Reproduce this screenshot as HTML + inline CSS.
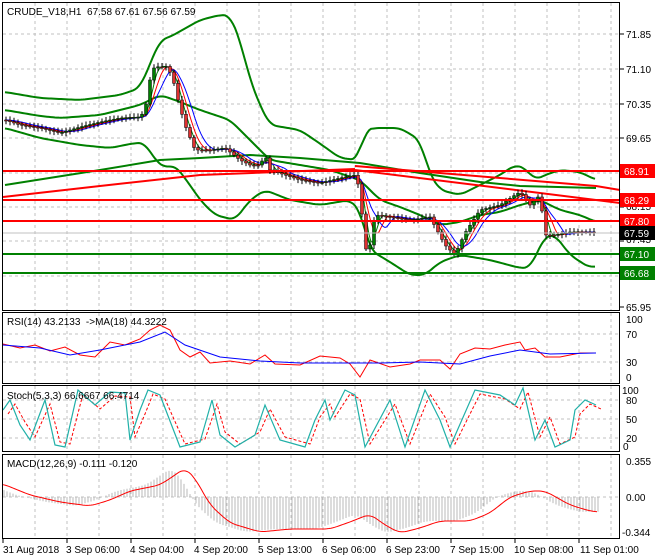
<!DOCTYPE html>
<html><head><meta charset="utf-8"><style>
body{margin:0;background:#fff;width:660px;height:560px;overflow:hidden}
svg{display:block}
text{font-family:"Liberation Sans",sans-serif;font-size:10px}
</style></head><body>
<svg id="s" width="660" height="560" xmlns="http://www.w3.org/2000/svg">
<rect width="660" height="560" fill="#fff"/>
<g id="grid" stroke="#c0c0c0" stroke-dasharray="3,3" stroke-width="1" fill="none"></g>
<g id="dyn"></g>
<g stroke-width="2" fill="none">
<line x1="2" y1="171" x2="620" y2="171" stroke="#f00"/>
<line x1="2" y1="200" x2="620" y2="200" stroke="#f00"/>
<line x1="2" y1="221" x2="620" y2="221" stroke="#f00"/>
<line x1="2" y1="254" x2="620" y2="254" stroke="#008000"/>
<line x1="2" y1="273" x2="620" y2="273" stroke="#008000"/>
</g>
<line x1="2" y1="233" x2="620" y2="233" stroke="#c0c0c0" stroke-width="1"/>
<g stroke="#000" fill="none" stroke-width="1">
<rect x="2.5" y="2.5" width="617" height="308"/>
<rect x="2.5" y="312.5" width="617" height="71"/>
<rect x="2.5" y="385.5" width="617" height="66"/>
<rect x="2.5" y="454.5" width="617" height="84"/>
</g>
<g id="ticks" stroke="#000"></g>
<text x="7" y="15" fill="#000">CRUDE_V18,H1&#160; 67.58 67.61 67.56 67.59</text>
<text x="7" y="325" fill="#000">RSI(14) 43.2133 &#160;-&gt;MA(18) 44.3222</text>
<text x="7" y="399" fill="#000">Stoch(5,3,3) 66.6667 66.4714</text>
<text x="7" y="467" fill="#000">MACD(12,26,9) -0.111 -0.120</text>
<g fill="#000">
<text x="626" y="38">71.85</text><text x="626" y="73">71.10</text><text x="626" y="108">70.35</text><text x="626" y="142">69.65</text>
<text x="626" y="210">68.15</text><text x="626" y="243">67.45</text><text x="626" y="311">65.95</text>
<text x="626" y="323">100</text><text x="626" y="338">70</text><text x="626" y="366">30</text><text x="626" y="381">0</text>
<text x="622" y="394">100</text><text x="626" y="404">80</text><text x="626" y="423">50</text><text x="626" y="442">20</text><text x="623" y="450">0</text>
<text x="626" y="465">0.355</text><text x="626" y="501">0.00</text><text x="622" y="536">-0.344</text>
</g>
<g>
<rect x="620" y="164" width="35" height="14" fill="#f00"/><text x="624" y="175" fill="#fff">68.91</text>
<rect x="620" y="193" width="35" height="14" fill="#f00"/><text x="624" y="204" fill="#fff">68.29</text>
<rect x="620" y="214" width="35" height="14" fill="#f00"/><text x="624" y="225" fill="#fff">67.80</text>
<rect x="620" y="226" width="35" height="14" fill="#000"/><text x="624" y="237" fill="#fff">67.59</text>
<rect x="620" y="247" width="35" height="14" fill="#008000"/><text x="624" y="258" fill="#fff">67.10</text>
<rect x="620" y="266" width="35" height="14" fill="#008000"/><text x="624" y="277" fill="#fff">66.68</text>
</g>
<g fill="#000">
<text x="3" y="553">31 Aug 2018</text><text x="66" y="553">3 Sep 06:00</text><text x="130" y="553">4 Sep 04:00</text>
<text x="194" y="553">4 Sep 20:00</text><text x="258" y="553">5 Sep 13:00</text><text x="322" y="553">6 Sep 06:00</text>
<text x="386" y="553">6 Sep 23:00</text><text x="450" y="553">7 Sep 15:00</text><text x="514" y="553">10 Sep 08:00</text>
<text x="580" y="553">11 Sep 01:00</text>
</g>
</svg>
<script>
var NS="http://www.w3.org/2000/svg",dyn=document.getElementById('dyn');
function el(t,a,p){var e=document.createElementNS(NS,t);for(var k in a)e.setAttribute(k,a[k]);(p||dyn).appendChild(e);return e;}
function pts(a){var s=[];for(var i=0;i<a.length;i+=2)s.push(a[i]+','+a[i+1]);return s.join(' ');}
function interp(a,x){if(x<=a[0])return a[1];for(var i=0;i<a.length-2;i+=2){if(x>=a[i]&&x<=a[i+2]){var t=(x-a[i])/(a[i+2]-a[i]||1);return a[i+1]+t*(a[i+3]-a[i+1]);}}return a[a.length-1];}
function smooth(a){var r=[];for(var x=a[0];x<=a[a.length-2];x+=2){var s=0,n=0;for(var j=-6;j<=6;j+=2){s+=interp(a,x+j);n++;}r.push(x,s/n);}return r;}
function line(a,c,w,d){var o={points:pts(a),fill:'none',stroke:c,'stroke-width':w||1};if(d)o['stroke-dasharray']=d;el('polyline',o);}
var g=document.getElementById('grid');
for(var x=35;x<620;x+=32){[[3,311],[313,384],[386,452],[455,538]].forEach(function(r){el('line',{x1:x,y1:r[0],x2:x,y2:r[1]},g);});}
[34,69,104,138,173,207,241,276].forEach(function(y){el('line',{x1:3,y1:y,x2:620,y2:y},g);});
[334,362].forEach(function(y){el('line',{x1:3,y1:y,x2:620,y2:y},g);});
[400,419,438].forEach(function(y){el('line',{x1:3,y1:y,x2:620,y2:y},g);});
el('line',{x1:3,y1:497,x2:620,y2:497},g);
var tk=document.getElementById('ticks');
for(var x=3;x<620;x+=64)el('line',{x1:x,y1:538,x2:x,y2:543},tk);
[34,69,104,138,207,241,307].forEach(function(y){el('line',{x1:620,y1:y,x2:624,y2:y},tk);});
var P=[5,120,20,125,40,128,60,133,80,127,100,122,120,118,140,117,145,110,150,80,155,65,160,68,165,65,172,75,178,100,185,125,195,150,210,150,225,148,240,160,250,165,260,165,265,155,270,170,285,175,300,180,320,183,340,178,355,175,360,190,365,250,370,245,375,215,390,217,410,220,430,217,445,245,455,255,465,233,480,210,500,205,515,195,520,192,530,205,540,195,545,235,555,235,570,232,590,232,596,232];
var UP=[5,92,40,98,80,100,120,95,140,88,160,40,170,37,200,20,220,15,230,15,240,40,250,80,262,110,270,125,300,130,322,145,340,158,358,160,365,130,375,128,400,128,420,140,430,175,440,190,460,195,480,185,500,175,515,165,525,168,535,180,545,175,560,170,580,172,596,180];
var MID=[5,110,40,116,60,118,100,115,140,105,160,95,175,100,200,110,230,120,250,140,270,160,300,165,330,170,345,175,360,180,380,200,400,207,420,215,440,225,460,222,480,215,500,212,520,205,540,200,560,210,580,215,596,222];
var LO=[5,128,40,138,80,145,110,148,135,143,145,143,155,160,165,168,175,165,190,185,200,200,215,215,235,220,250,200,265,190,290,200,320,205,350,200,360,210,370,250,390,262,410,275,425,275,440,262,460,255,490,260,520,268,530,268,545,236,555,235,570,255,590,268,596,266];
var SLOW=[5,185,100,170,160,160,200,158,250,155,300,158,360,163,420,173,480,182,520,186,596,188];
line(SLOW,'#008000',2);line(smooth(UP),'#008000',2);line(smooth(MID),'#008000',2);line(smooth(LO),'#008000',2);
line([3,197,100,186,200,175,355,169],'#f00',2);
line([355,166,596,186,620,190],'#f00',2);line([355,170,620,203],'#f00',2);
function sm(a,k){var r=[];for(var x=5;x<=596;x+=2){var s=0,n=0;for(var j=0;j<k;j+=2){s+=interp(P,Math.max(5,x-j));n++;}r.push(x,s/n);}return r;}
line(sm(P,10),'#008000',1);line(sm(P,16),'#f00',1);line(sm(P,24),'#00f',1);
for(var x=6;x<=596;x+=4){var c=interp(P,x),o=interp(P,x-4),f=Math.sin(x*1.7)*2;
 var hi=Math.min(o,c)-2-Math.abs(f),lo=Math.max(o,c)+2+Math.abs(Math.cos(x))*2;
 el('line',{x1:x,y1:hi,x2:x,y2:lo,stroke:'#000','stroke-width':1});
 var t=Math.min(o,c),h=Math.max(1,Math.abs(o-c));
 el('rect',{x:x-1.5,y:t,width:3,height:h,fill:c<o?'#008000':'#e03030',stroke:'#000','stroke-width':0.5});}
line([3,344,20,348,35,345,50,351,65,347,80,355,95,357,110,342,125,345,140,339,150,330,160,325,170,330,180,350,190,357,200,352,210,363,230,361,250,364,265,355,275,364,300,365,320,356,340,358,350,364,360,377,370,360,390,367,410,364,420,360,440,360,450,369,460,354,475,348,490,349,505,345,520,342,525,350,535,348,545,357,560,357,580,353,596,353],'#f00',1);
line([3,345,40,348,70,355,100,350,140,342,165,332,185,345,220,357,260,361,300,363,340,363,380,363,420,362,460,364,490,356,520,350,550,354,596,353],'#00f',1);
var ST=[3,410,10,400,20,425,30,440,45,400,55,445,65,447,78,390,95,405,110,392,125,393,130,440,140,410,148,390,160,395,180,447,200,442,212,400,220,435,235,447,255,435,265,405,280,440,305,447,315,420,325,400,330,420,345,390,355,395,365,447,390,400,405,447,425,390,440,420,450,447,475,390,500,395,515,405,523,388,535,440,545,420,555,447,570,440,575,410,585,400,596,405];
var ST2=[];for(var i=0;i<ST.length;i+=2)ST2.push(ST[i]+5,ST[i+1]+(ST[i+1]<420?4:-3));
line(ST2,'#f00',1,'3,2');line(ST,'#20b0a8',1.2);
var M=[3,484,30,495,60,502,90,506,110,500,130,491,160,485,175,475,185,468,195,478,210,505,230,523,260,532,290,529,330,529,350,522,370,514,385,525,400,533,420,528,440,521,470,521,490,513,510,497,530,491,545,491,570,505,590,511,598,512];
M=smooth(M);
for(var x=4;x<=598;x+=3){var m=interp(M,Math.min(598,x+14));
 el('line',{x1:x,y1:497,x2:x,y2:m,stroke:'#b8b8b8','stroke-width':1});}
line(M,'#f00',1);
</script>
</body></html>
